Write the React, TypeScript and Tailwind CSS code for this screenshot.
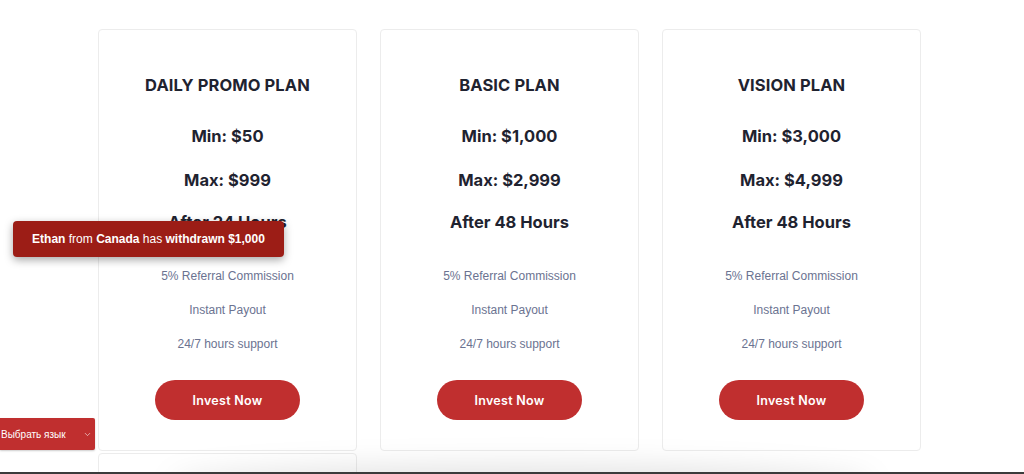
import React from 'react';
import { ChevronDown } from 'lucide-react';

type Plan = {
  name: string;
  min: string;
  max: string;
  payout: string;
};

const plans: Plan[] = [
  { name: 'DAILY PROMO PLAN', min: '$50', max: '$999', payout: 'After 24 Hours' },
  { name: 'BASIC PLAN', min: '$1,000', max: '$2,999', payout: 'After 48 Hours' },
  { name: 'VISION PLAN', min: '$3,000', max: '$4,999', payout: 'After 48 Hours' },
];

const features = ['5% Referral Commission', 'Instant Payout', '24/7 hours support'];

const heading = "font-['Inter',sans-serif] font-bold text-[#1f2330]";

const PlanCard: React.FC<{ plan: Plan }> = ({ plan }) => (
  <div className="bg-white border border-[#ececec] rounded-[4px] flex flex-col items-center pt-[43px] pb-[30px]">
    <h3 className={`${heading} text-[16.5px] leading-6 tracking-[0.1px]`}>{plan.name}</h3>
    <p className={`${heading} text-[16.5px] leading-6 mt-[27px]`}>Min: {plan.min}</p>
    <p className={`${heading} text-[16.5px] leading-6 mt-[20px]`}>Max: {plan.max}</p>
    <p className={`${heading} text-[16.5px] leading-6 mt-[18px]`}>{plan.payout}</p>
    <ul className="mt-[33px] flex flex-col items-center gap-[16px] font-['Liberation_Sans',Arial,sans-serif] text-[12px] leading-[18px] text-[#6b7391]">
      {features.map((f) => (
        <li key={f}>{f}</li>
      ))}
    </ul>
    <button className="mt-[27px] w-[145px] h-[40px] pt-[2px] rounded-full bg-[#c02f2f] text-white font-['Inter',sans-serif] font-semibold text-[12.5px] tracking-[0.3px]">
      Invest Now
    </button>
  </div>
);

const App: React.FC = () => {
  return (
    <div className="h-[474px] w-[1024px] bg-white overflow-hidden relative">
      <div className="pt-[29px] pl-[98px]">
        <div className="grid grid-cols-[259px_259px_259px] gap-x-[23px] gap-y-[2px]">
          {plans.map((p) => (
            <PlanCard key={p.name} plan={p} />
          ))}
          <div className="bg-white border border-[#ececec] rounded-[4px] h-[120px]" />
        </div>
      </div>

      {/* shadow of the section below */}
      <div className="absolute left-[170px] right-[150px] bottom-[-30px] h-[40px] rounded-[50%] bg-[#000]/10 blur-[14px] pointer-events-none" />

      {/* withdrawal toast */}
      <div className="absolute left-[13px] top-[221px] w-[271px] h-[36px] rounded-[4px] bg-[#9c1d16] shadow-[0_3px_8px_rgba(0,0,0,0.35)] flex items-center justify-center font-['Liberation_Sans',Arial,sans-serif] text-[12px] text-white">
        <span>
          <b>Ethan</b> from <b>Canada</b> has <b>withdrawn $1,000</b>
        </span>
      </div>

      {/* language select */}
      <div className="absolute left-0 top-[418px] w-[95px] h-[32px] rounded-r-[2px] bg-[#c02f2f] shadow-[0_1px_2px_rgba(0,0,0,0.2)] flex items-center justify-between pl-[1px] pr-[3px] font-['Liberation_Sans',Arial,sans-serif] text-[10px] text-white">
        <span>Выбрать язык</span>
        <ChevronDown className="w-[9px] h-[9px]" strokeWidth={1.5} />
      </div>

      <div className="absolute left-0 right-0 bottom-0 h-[2px] bg-[#3b3b3b]" />
    </div>
  );
};

export default App;
